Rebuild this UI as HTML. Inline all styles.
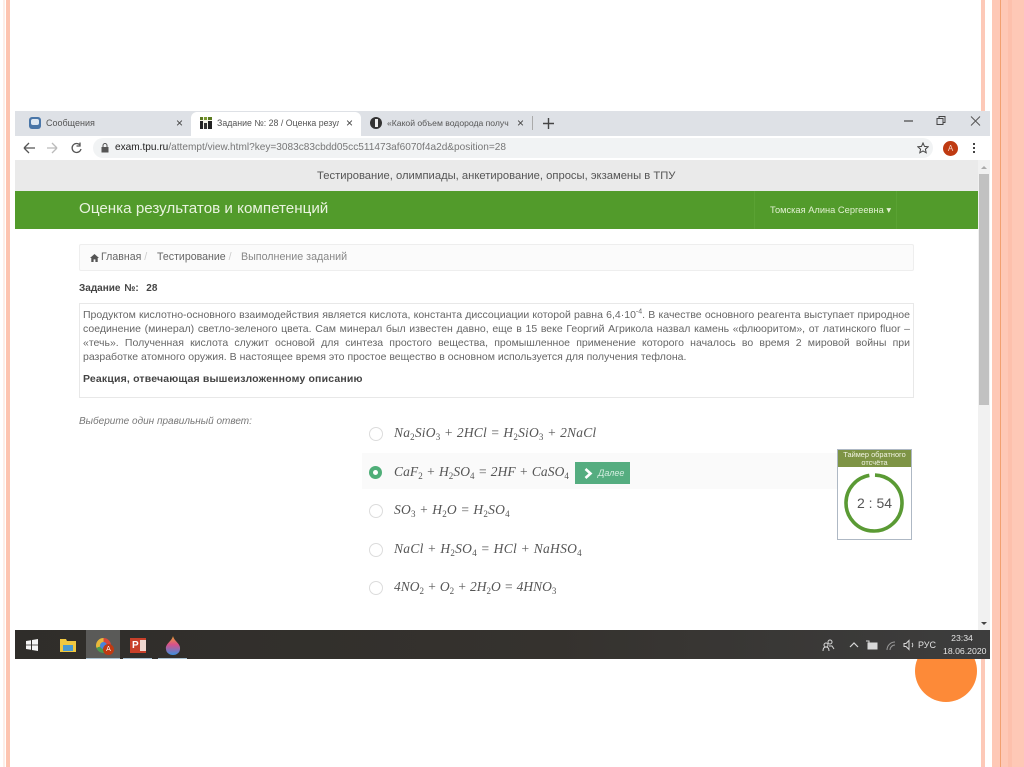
<!DOCTYPE html>
<html lang="ru"><head><meta charset="utf-8"><title>Оценка результатов</title>
<style>
html,body{margin:0;padding:0;background:#fff}
#p{position:relative;width:1024px;height:767px;overflow:hidden;background:#fff;font-family:"Liberation Sans",sans-serif;color:#555;filter:blur(.35px)}
#p div,#p span.a,#p svg{position:absolute}
.t{white-space:nowrap}
.j{white-space:nowrap;text-align:justify;text-align-last:justify}
.m{font-family:"Liberation Serif",serif;font-style:italic;font-size:13.5px;color:#555;white-space:nowrap}
.m sub{font-size:9px;font-style:normal;line-height:0;vertical-align:-3px}
.r{width:12px;height:12px;border:1px solid #dcdcdc;border-radius:50%;left:369px;background:#fff}
</style></head><body><div id="p">
<div style="left:3px;top:0;width:2px;height:767px;background:#fdeee8"></div>
<div style="left:6px;top:0;width:4px;height:767px;background:#fdc4b0"></div>
<div style="left:981px;top:0;width:4px;height:767px;background:#fdc9b8"></div>
<div style="left:992px;top:0;width:32px;height:767px;background:#fec8b6"></div>
<div style="left:1000px;top:0;width:1px;height:767px;background:#f2a070"></div>
<div style="left:1008px;top:0;width:4px;height:767px;background:#fdc0ac"></div>

<div style="left:915px;top:640px;width:62px;height:62px;border-radius:50%;background:#fd8a38"></div>

<!-- browser -->
<div style="left:15px;top:111px;width:975px;height:25px;background:#dee1e6"></div>
<div style="left:191px;top:112px;width:170px;height:24px;background:#fff;border-radius:6px 6px 0 0"></div>
<div style="left:29px;top:117px;width:12px;height:12px;border-radius:3px;background:#4a76a8"></div>
<div style="left:31px;top:119px;width:8px;height:6px;border-radius:2px;background:#dfe8f2"></div>
<div class="t" style="left:46px;top:118px;font-size:9px;color:#555">Сообщения</div>
<div class="t" style="left:176px;top:116px;font-size:12px;color:#444">×</div>
<svg style="left:200px;top:117px" width="12" height="12"><rect width="12" height="12" fill="#f4f4e8"/><rect x="0" y="0" width="3" height="3" fill="#5a7a20"/><rect x="4" y="0" width="3" height="3" fill="#7a9a30"/><rect x="8" y="0" width="4" height="3" fill="#5a7a20"/><rect x="0" y="4" width="3" height="8" fill="#222"/><rect x="4" y="6" width="3" height="6" fill="#333"/><rect x="8" y="4" width="4" height="8" fill="#222"/></svg>
<div class="t" style="left:217px;top:118px;font-size:8.8px;color:#555;width:122px;overflow:hidden">Задание №: 28 / Оценка резуль</div>
<div class="t" style="left:346px;top:116px;font-size:12px;color:#444">×</div>
<div style="left:370px;top:117px;width:12px;height:12px;border-radius:50%;background:#333"></div>
<div style="left:375px;top:119px;width:3px;height:8px;background:#eee"></div>
<div class="t" style="left:387px;top:118px;font-size:8.6px;color:#555;width:125px;overflow:hidden">«Какой объем водорода получ</div>
<div class="t" style="left:517px;top:116px;font-size:12px;color:#444">×</div>
<div style="left:532px;top:116px;width:1px;height:14px;background:#aaa"></div>
<svg style="left:543px;top:118px" width="11" height="11"><path d="M5.5 0V11M0 5.5H11" stroke="#444" stroke-width="1.4"/></svg>
<svg style="left:903px;top:114px" width="80" height="14"><path d="M1 7H10" stroke="#444" stroke-width="1.2"/><path d="M34 4.5h6v6h-6zM36 4.5v-2h6v6h-2" fill="none" stroke="#444"/><path d="M68 2.5l9 9M77 2.5l-9 9" stroke="#555" stroke-width="1"/></svg>

<div style="left:15px;top:136px;width:975px;height:24px;background:#fff"></div>
<div style="left:93px;top:138px;width:840px;height:20px;border-radius:10px;background:#f1f3f4"></div>
<svg style="left:23px;top:141px" width="62" height="14"><path d="M1 7H12M1 7L6 2M1 7L6 12" stroke="#555" fill="none" stroke-width="1.3"/><path d="M24 7H34M34 7L29 2M34 7L29 12" stroke="#bbb" fill="none" stroke-width="1.3"/><path d="M57 4A4.5 4.5 0 1 0 58 8M57 1.5V5H53.5" stroke="#555" fill="none" stroke-width="1.3"/></svg>
<svg style="left:101px;top:143px" width="8" height="10"><rect x="0.5" y="4" width="7" height="5.5" fill="#555"/><path d="M2 4V2.5a2 2 0 0 1 4 0V4" fill="none" stroke="#555"/></svg>
<div class="t" style="left:115px;top:142px;font-size:10.1px;color:#777"><span style="color:#222">exam.tpu.ru</span>/attempt/view.html?key=3083c83cbdd05cc511473af6070f4a2d&amp;position=28</div>
<svg style="left:917px;top:142px" width="12" height="12"><path d="M6 1l1.5 3.4 3.7.4-2.8 2.4.8 3.6L6 9l-3.2 1.8.8-3.6L.8 4.8l3.7-.4z" fill="none" stroke="#444"/></svg>
<div style="left:943px;top:141px;width:15px;height:15px;border-radius:50%;background:#bf3a12;color:#f5d5c5;font-size:8px;line-height:15px;text-align:center">A</div>
<div style="left:973px;top:143px;width:2px;height:2px;background:#444;box-shadow:0 4px #444,0 8px #444"></div>

<!-- page -->
<div style="left:15px;top:160px;width:975px;height:470px;background:#fff"></div>
<div style="left:15px;top:160px;width:963px;height:31px;background:#eaeaea"></div>
<div class="t" style="left:317px;top:170px;font-size:11.23px;color:#555">Тестирование, олимпиады, анкетирование, опросы, экзамены в ТПУ</div>
<div style="left:15px;top:191px;width:963px;height:38px;background:#529b2b"></div>
<div style="left:754px;top:191px;width:143px;height:38px;border-left:1px solid #5aa233;border-right:1px solid #5aa233;box-sizing:border-box"></div>
<div class="t" style="left:79px;top:200px;font-size:15.2px;color:#e9f3df">Оценка результатов и компетенций</div>
<div class="t" style="left:770px;top:205px;font-size:9.3px;color:#e2f0d2">Томская Алина Сергеевна ▾</div>
<div style="left:978px;top:160px;width:12px;height:470px;background:#f1f1f1"></div>
<div style="left:979px;top:174px;width:10px;height:231px;background:#c1c1c1"></div>
<svg style="left:980px;top:165px" width="8" height="5"><path d="M4 1l3 3H1z" fill="#aaa"/></svg>
<svg style="left:980px;top:621px" width="8" height="5"><path d="M4 4L1 1h6z" fill="#444"/></svg>

<div style="left:79px;top:244px;width:835px;height:27px;box-sizing:border-box;background:#fbfbfb;border:1px solid #eee;border-radius:2px"></div>
<svg style="left:90px;top:254px" width="9" height="8"><path d="M4.5 0L9 4H7.7V8H5.4V5.4H3.6V8H1.3V4H0z" fill="#555"/></svg>
<div class="t" style="left:101px;top:251px;font-size:10.6px;color:#666">Главная <span style="color:#ccc">/</span></div>
<div class="t" style="left:157px;top:251px;font-size:10.6px;color:#666">Тестирование <span style="color:#ccc">/</span></div>
<div class="t" style="left:241px;top:251px;font-size:10.7px;color:#888">Выполнение заданий</div>
<div class="t" style="left:79px;top:283px;font-size:10px;font-weight:bold;color:#444;word-spacing:1px">Задание №:&nbsp; 28</div>

<div style="left:79px;top:303px;width:835px;height:95px;box-sizing:border-box;border:1px solid #e8e8e8"></div>
<div class="j" style="left:83px;top:308px;width:827px;font-size:10.5px;line-height:14px;color:#666">Продуктом кислотно-основного взаимодействия является кислота, константа диссоциации которой равна 6,4·10<sup style="font-size:7px;line-height:0">-4</sup>. В качестве основного реагента выступает природное</div>
<div class="j" style="left:83px;top:322px;width:827px;font-size:10.5px;line-height:14px;color:#666">соединение (минерал) светло-зеленого цвета. Сам минерал был известен давно, еще в 15 веке Георгий Агрикола назвал камень «флюоритом», от латинского fluor –</div>
<div class="j" style="left:83px;top:336px;width:827px;font-size:10.5px;line-height:14px;color:#666">«течь». Полученная кислота служит основой для синтеза простого вещества, промышленное применение которого началось во время 2 мировой войны при</div>
<div class="t" style="left:83px;top:350px;font-size:10.5px;line-height:14px;color:#666">разработке атомного оружия. В настоящее время это простое вещество в основном используется для получения тефлона.</div>
<div class="t" style="left:83px;top:372px;font-size:10.5px;line-height:14px;font-weight:bold;color:#444;letter-spacing:.17px">Реакция, отвечающая вышеизложенному описанию</div>
<div class="t" style="left:79px;top:416px;font-size:10px;font-style:italic;color:#777">Выберите один правильный ответ:</div>

<div style="left:362px;top:453px;width:475px;height:36px;background:#fafafa"></div>
<div class="r" style="top:427px"></div>
<div class="m" style="left:394px;top:425px;letter-spacing:.2px">Na<sub>2</sub>SiO<sub>3</sub> + 2HCl = H<sub>2</sub>SiO<sub>3</sub> + 2NaCl</div>
<div style="left:369px;top:466px;width:13px;height:13px;border-radius:50%;background:#4fae78"></div>
<div style="left:373px;top:470px;width:5px;height:5px;border-radius:50%;background:#fff"></div>
<div class="m" style="left:394px;top:464px;letter-spacing:.08px">CaF<sub>2</sub> + H<sub>2</sub>SO<sub>4</sub> = 2HF + CaSO<sub>4</sub></div>
<div style="left:575px;top:462px;width:55px;height:22px;background:#55ad80"></div>
<svg style="left:584px;top:468px" width="9" height="11"><path d="M1.5 1L6.5 5.5L1.5 10" fill="none" stroke="#fff" stroke-width="2.6"/></svg>
<div class="t" style="left:598px;top:468px;font-size:9px;font-style:italic;color:#d5eee0">Далее</div>
<div class="r" style="top:504px"></div>
<div class="m" style="left:394px;top:502px;letter-spacing:.22px">SO<sub>3</sub> + H<sub>2</sub>O = H<sub>2</sub>SO<sub>4</sub></div>
<div class="r" style="top:543px"></div>
<div class="m" style="left:394px;top:541px;letter-spacing:.28px">NaCl + H<sub>2</sub>SO<sub>4</sub> = HCl + NaHSO<sub>4</sub></div>
<div class="r" style="top:581px"></div>
<div class="m" style="left:394px;top:579px;letter-spacing:0">4NO<sub>2</sub> + O<sub>2</sub> + 2H<sub>2</sub>O = 4HNO<sub>3</sub></div>

<!-- timer -->
<div style="left:837px;top:449px;width:75px;height:91px;box-sizing:border-box;border:1px solid #aeb8c4;background:#fff"></div>
<div style="left:838px;top:450px;width:73px;height:17px;background:#7e9445;color:#f2f4e4;font-size:7.4px;line-height:7.6px;text-align:center;padding-top:1px;box-sizing:border-box">Таймер обратного<br>отсчёта</div>
<svg style="left:841px;top:471px" width="66" height="64"><circle cx="33" cy="32" r="28" fill="none" stroke="#5a9a34" stroke-width="3.6" stroke-dasharray="170 6" transform="rotate(-88 33 32)"/></svg>
<div class="t" style="left:855px;top:495px;width:39px;text-align:center;font-size:14px;color:#555">2 : 54</div>

<!-- taskbar -->
<div style="left:15px;top:630px;width:975px;height:29px;background:linear-gradient(90deg,#2f2d2a,#35322e 55%,#3d3d3d)"></div>
<div style="left:86px;top:630px;width:34px;height:29px;background:#5a5a58"></div>
<svg style="left:26px;top:639px" width="12" height="12"><path d="M0 2l5-.8V5.6H0zM6 1l6-1V5.6H6zM0 6.4H5V10.8L0 10zM6 6.4H12V12L6 11z" fill="#f5f5f5"/></svg>
<svg style="left:60px;top:638px" width="16" height="14"><path d="M0 1h6l1 2h9v11H0z" fill="#f0c840"/><rect x="3" y="7" width="10" height="6" fill="#4a9ad0"/></svg>
<div style="left:96px;top:638px;width:15px;height:15px;border-radius:50%;background:conic-gradient(#d8473a 0 35%,#4a9a50 35% 70%,#e8b83a 70%)"></div>
<div style="left:100px;top:642px;width:7px;height:7px;border-radius:50%;background:#4a84d8"></div>
<div style="left:103px;top:644px;width:11px;height:11px;border-radius:50%;background:#bf3a12;color:#fff;font-size:7px;line-height:11px;text-align:center">A</div>
<div style="left:130px;top:638px;width:16px;height:15px;background:#c8402a;color:#fff;font-size:10px;font-weight:bold;line-height:15px;padding-left:2px;box-sizing:border-box">P</div>
<div style="left:140px;top:640px;width:6px;height:11px;background:#f0d8d0"></div>
<svg style="left:165px;top:636px" width="16" height="19"><defs><linearGradient id="g" x1="0" y1="0" x2="0" y2="1"><stop offset="0" stop-color="#e8a030"/><stop offset=".45" stop-color="#d8508a"/><stop offset="1" stop-color="#3a90e0"/></linearGradient></defs><path d="M8 0C9 5 16 8 15 13A7 6 0 0 1 1 13C0 8 7 5 8 0z" fill="url(#g)"/></svg>
<div style="left:86px;top:658px;width:34px;height:1px;background:#a8c0d0"></div>
<div style="left:123px;top:658px;width:29px;height:1px;background:#a8c0d0"></div>
<div style="left:158px;top:658px;width:29px;height:1px;background:#a8c0d0"></div>
<svg style="left:821px;top:638px" width="100" height="14" fill="none" stroke="#d8d8d8"><circle cx="9" cy="4" r="2"/><circle cx="5" cy="7" r="2"/><path d="M2 13c0-3 1-4 3-4s3 1 3 4M8 8h3l2 3"/><path d="M29 9l4-4 4 4" stroke-width="1.2"/><rect x="47" y="5" width="9" height="6" fill="#d8d8d8"/><path d="M45 3h3v2"/><path d="M66 12a8 8 0 0 1 8-8M69 12a5 5 0 0 1 5-5" stroke="#999"/><path d="M83 5.5h2l3-3v9l-3-3h-2zM91 5a3 3 0 0 1 0 4"/></svg>
<div class="t" style="left:918px;top:640px;font-size:9px;color:#e0e0e0">РУС</div>
<div class="t" style="left:943px;top:632px;width:38px;text-align:center;font-size:8.7px;line-height:12.5px;color:#e4e4e4">23:34<br>18.06.2020</div>
</div></body></html>
